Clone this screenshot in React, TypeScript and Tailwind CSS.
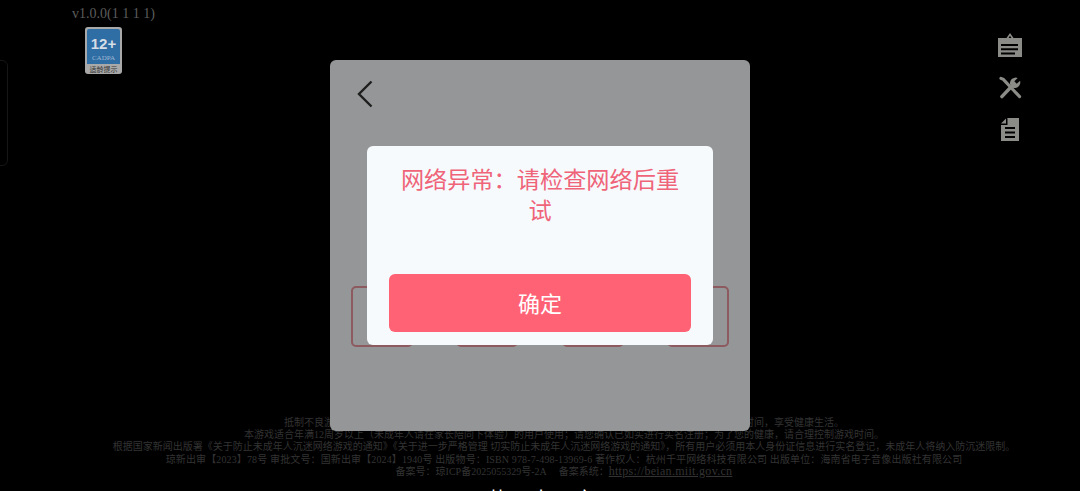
const serif = "font-['Liberation_Serif','Noto_Sans_CJK_SC',serif]"

function NoticeIcon() {
  return (
    <svg width="24" height="24" viewBox="0 0 24 24" className="text-[#8b8b88]">
      <path
        fill="currentColor"
        fillRule="evenodd"
        d="M0 5h8.500L12 0l3.500 5H24v19H0zM12 2.800 10.600 5h2.800zM3 11v2h17v-2zM3 15.200v2h17v-2zM3 19.400v2h14v-2z"
      />
    </svg>
  )
}

function ToolsIcon() {
  return (
    <svg width="23" height="23" viewBox="0 0 23 24" className="text-[#8b8b88]">
      <path d="M1.500 2.500 L4 3.500 L21 21.500" stroke="currentColor" strokeWidth="3.200" fill="none" strokeLinecap="round" />
      <path d="M2.500 21.500 L13 10.500" stroke="currentColor" strokeWidth="3.600" fill="none" strokeLinecap="round" />
      <path fill="currentColor" d="M11 8.500a6 6 0 0 1 8-6.500l-3.500 3.500 2.500 2.700L21.500 5a6 6 0 0 1-7 7.500z" />
    </svg>
  )
}

function DocIcon() {
  return (
    <svg width="18" height="23" viewBox="0 0 18 23" className="text-[#8b8b88]">
      <path
        fill="currentColor"
        fillRule="evenodd"
        d="M6 0h12v23H0V7h6.500V.5zM4 9v2h10V9zM4 13.500v2h10v-2zM4 18v2h10v-2z"
      />
      <path fill="currentColor" d="M5 0.500v5H0z" />
    </svg>
  )
}

function AgeBadge() {
  return (
    <div className="flex h-[47px] w-[37px] flex-col rounded-[3px] bg-[#a9a9a9] px-[2px] pt-[2px]">
      <div className="flex h-[35px] flex-col items-center rounded-t-[2px] bg-[#2f6da5]">
        <div className="mt-[7px] font-['Liberation_Sans',sans-serif] text-[15px] leading-[16px] font-bold text-[#d5dde6]">
          12+
        </div>
        <div className={`${serif} mt-[2px] text-[7px] leading-[8px] text-[#9db8d2]`}>CADPA</div>
      </div>
      <div className="text-center font-['Noto_Sans_CJK_SC',sans-serif] text-[7px] leading-[10px] whitespace-nowrap text-[#333333]">
        适龄提示
      </div>
    </div>
  )
}

export default function App() {
  return (
    <div className="relative h-[491px] w-[1080px] overflow-hidden bg-black">
      {/* what sits behind the dimmed panel */}
      <div className="flex h-full flex-col">
        <div className="flex flex-1 justify-between pr-[58px] pl-[72px]">
          <div className="flex flex-col items-start pt-[6px]">
            <div className={`${serif} text-[14px] leading-[16px] text-[#5c5c5c]`}>v1.0.0(1 1 1 1)</div>
            <div className="mt-[5px] ml-[13px]">
              <AgeBadge />
            </div>
          </div>
          <div className="flex flex-col items-center gap-[19px] pt-[33px]">
            <NoticeIcon />
            <ToolsIcon />
            <DocIcon />
          </div>
        </div>
        <div
          className={`${serif} pb-[13px] pl-[48px] text-center text-[10px] leading-[12.250px] whitespace-nowrap text-[#333333]`}
        >
          <p>抵制不良游戏，拒绝盗版游戏。注意自我保护，谨防受骗上当。适度游戏益脑，沉迷游戏伤身。合理安排时间，享受健康生活。</p>
          <p>本游戏适合年满12周岁以上（未成年人请在家长陪同下体验）的用户使用；请您确认已如实进行实名注册；为了您的健康，请合理控制游戏时间。</p>
          <p>
            根据国家新闻出版署《关于防止未成年人沉迷网络游戏的通知》《关于进一步严格管理 切实防止未成年人沉迷网络游戏的通知》，所有用户必须用本人身份证信息进行实名登记，未成年人将纳入防沉迷限制。
          </p>
          <p className="tracking-[0.13px]">
            琼新出审【2023】78号 审批文号：国新出审【2024】1940号 出版物号：ISBN 978-7-498-13969-6 著作权人：杭州千平网络科技有限公司 出版单位：海南省电子音像出版社有限公司
          </p>
          <p>
            备案号：琼ICP备2025055329号-2A　  备案系统：
            <span className="text-[12px] leading-[10px] tracking-[0.3px] underline">https://beian.miit.gov.cn</span>
          </p>
        </div>
      </div>

      {/* faint edge of a side drawer */}
      <div className="absolute top-[60px] left-[-8px] h-[106px] w-[16px] rounded-[6px] border border-[#161616]" />

      {/* cut off title at the bottom edge */}
      <div className="absolute top-[487px] left-[487px] font-['Noto_Sans_CJK_SC',sans-serif] text-[20px] leading-[24px] tracking-[24px] whitespace-nowrap text-white">
        若水之
      </div>

      {/* dimmed panel */}
      <div className="absolute top-[60px] left-[330px] h-[371px] w-[420px] rounded-[6px] bg-[#959697]">
        <svg width="16" height="28" viewBox="0 0 16 28" className="absolute top-[20px] left-[27px]">
          <path d="M14.500 1.500 L2 14 L14.500 26.500" fill="none" stroke="#1e1e1e" strokeWidth="2.400" />
        </svg>
        <div className="mt-[226px] ml-[21px] flex w-[378px] justify-between">
          {[0, 1, 2, 3].map((i) => (
            <div key={i} className="h-[61px] w-[62px] rounded-[5px] border-2 border-[#8c5a5f]" />
          ))}
        </div>
      </div>

      {/* alert */}
      <div className="absolute top-[146px] left-[367px] flex h-[199px] w-[346px] flex-col rounded-[6px] bg-[#f6fafd] px-[22px] pt-[17px] pb-[13px]">
        <div className="px-[10px] text-center font-['Noto_Sans_CJK_SC',sans-serif] text-[23.200px] leading-[31px] text-[#ef6479]">
          网络异常：请检查网络后重试
        </div>
        <button className="mt-auto flex h-[58px] w-[302px] items-center justify-center rounded-[6px] bg-[#ff6275] pb-[2px] font-['Noto_Sans_CJK_SC',sans-serif] text-[22px] text-white">
          确定
        </button>
      </div>
    </div>
  )
}
